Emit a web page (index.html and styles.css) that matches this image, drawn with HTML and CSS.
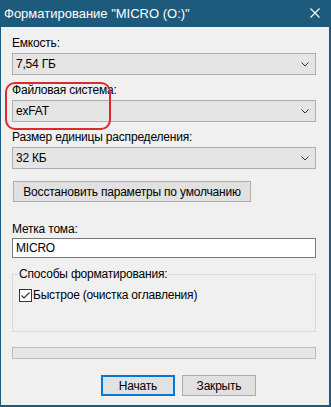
FILE: index.html
```html
<!DOCTYPE html>
<html lang="ru">
<head>
<meta charset="utf-8">
<title>Форматирование</title>
<link rel="stylesheet" href="styles.css">
</head>
<body>
<div class="window">
  <div class="titlebar">
    <span class="title">Форматирование "MICRO (O:)"</span>
    <svg class="close" width="10" height="10" viewBox="0 0 10 10"><path d="M0.5 0.5L9.5 9.5M9.5 0.5L0.5 9.5" stroke="#fff" stroke-width="1.1" fill="none"/></svg>
  </div>
  <div class="content">
    <div class="field">
      <div class="label">Емкость:</div>
      <div class="select"><span>7,54 ГБ</span><svg class="chev" width="8" height="5" viewBox="0 0 8 5"><path d="M0.5 0.5L4 4L7.5 0.5" stroke="#333" stroke-width="1" fill="none"/></svg></div>
    </div>
    <div class="field highlighted">
      <div class="label">Файловая система:</div>
      <div class="select"><span>exFAT</span><svg class="chev" width="8" height="5" viewBox="0 0 8 5"><path d="M0.5 0.5L4 4L7.5 0.5" stroke="#333" stroke-width="1" fill="none"/></svg></div>
      <div class="mark"></div>
    </div>
    <div class="field">
      <div class="label">Размер единицы распределения:</div>
      <div class="select"><span>32 КБ</span><svg class="chev" width="8" height="5" viewBox="0 0 8 5"><path d="M0.5 0.5L4 4L7.5 0.5" stroke="#333" stroke-width="1" fill="none"/></svg></div>
    </div>
    <div class="btn reset">Восстановить параметры по умолчанию</div>
    <div class="label volume">Метка тома:</div>
    <div class="input">MICRO</div>
    <fieldset class="group">
      <legend>Способы форматирования:</legend>
      <div class="check-row">
        <svg class="check" width="13" height="13" viewBox="0 0 13 13"><rect x="0.5" y="0.5" width="12" height="12" fill="#fff" stroke="#333"/><path d="M2.5 6.5L5 9L10.5 3.5" stroke="#333" stroke-width="1.2" fill="none"/></svg>
        <span>Быстрое (очистка оглавления)</span>
      </div>
    </fieldset>
    <div class="progress"></div>
    <div class="actions">
      <div class="btn primary">Начать</div>
      <div class="btn">Закрыть</div>
    </div>
  </div>
</div>
</body>
</html>
```
FILE: styles.css
```css
* { box-sizing: border-box; }
html, body { margin: 0; padding: 0; }
body {
  font-family: "Liberation Sans", Arial, sans-serif;
  font-size: 12px;
  letter-spacing: -0.2px;
  color: #000;
  background: #f0f0f0;
  white-space: nowrap;
}
.window {
  width: 331px;
  height: 407px;
  background: #f0f0f0;
  border: solid #1d5a7c;
  border-width: 0 2px 2px 1px;
  display: flex;
  flex-direction: column;
}
.titlebar {
  height: 27px;
  margin: 0 -2px 0 -1px;
  background: #1d5a7c;
  color: #fff;
  display: flex;
  align-items: center;
  justify-content: space-between;
  padding: 0 11px 1px 4px;
}
.title { font-size: 13px; line-height: 15px; letter-spacing: 0; }
.close { display: block; }
.content {
  padding: 9px 13px 0 11px;
  display: flex;
  flex-direction: column;
}
.label { line-height: 15px; height: 15px; margin-bottom: 2px; }
.field { position: relative; }
.field + .field { margin-top: 8px; }
.select {
  height: 22px;
  border: 1px solid #adadad;
  background: #e5e5e5;
  display: flex;
  align-items: center;
  justify-content: space-between;
  padding: 0 6px 0 3px;
}
.chev { display: block; }
.mark {
  position: absolute;
  left: -7px;
  top: -1px;
  width: 106px;
  height: 48px;
  border: 2px solid #dc2a30;
  border-radius: 10px;
}
.btn {
  height: 21px;
  border: 1px solid #adadad;
  background: #e1e1e1;
  display: flex;
  align-items: center;
  justify-content: center;
}
.reset { margin: 12px 0 0 1px; width: 238px; }
.volume { margin-top: 20px; margin-bottom: 1px; }
.input {
  height: 20px;
  border: 1px solid #7a7a7a;
  background: #fff;
  padding-left: 3px;
  display: flex;
  align-items: center;
}
.group {
  margin: 9px 0 0 0;
  height: 65px;
  border: 1px solid #dcdcdc;
  padding: 6px 6px 0 6px;
}
.group legend { padding: 0 1px; line-height: 15px; margin-left: -1px; }
.check-row { display: flex; align-items: center; gap: 1px; line-height: 15px; }
.check { display: block; }
.progress {
  margin-top: 15px;
  height: 12px;
  border: 1px solid #bcbcbc;
  background: #e6e6e6;
}
.actions {
  margin: 16px 0 0 89px;
  display: flex;
  gap: 7px;
}
.actions .btn { width: 74px; }
.btn.primary { border: 2px solid #0078d7; }
```
